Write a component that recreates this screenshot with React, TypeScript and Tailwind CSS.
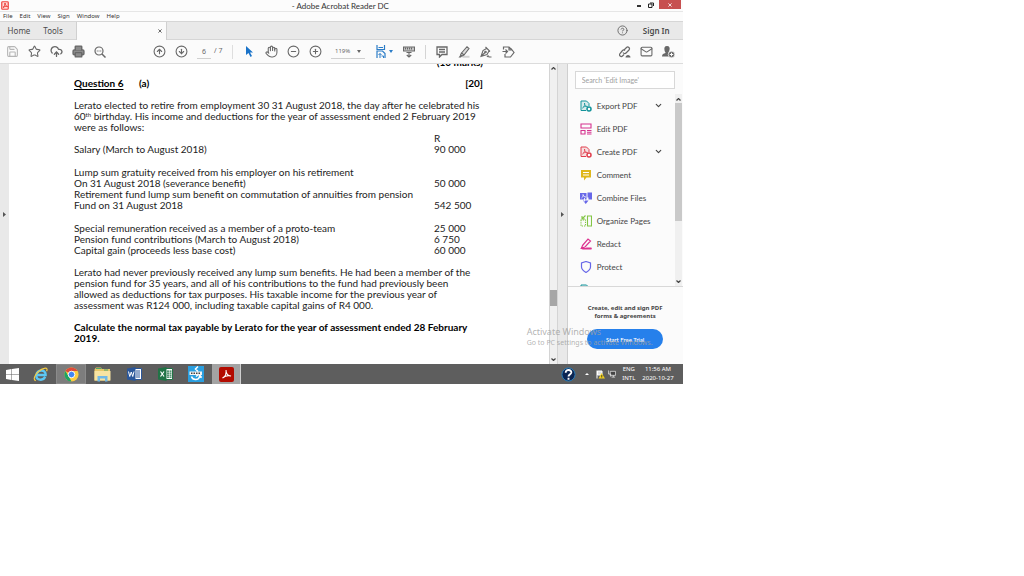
import * as React from 'react';
import {
  ChevronDown,
  CircleArrowDown,
  CircleArrowUp,
  CircleHelp,
  CircleMinus,
  CirclePlus,
  CloudUpload,
  Hand,
  Mail,
  Printer,
  Save,
  Star,
} from 'lucide-react';

type IconButtonProps = { label: string; className?: string; children: React.ReactNode };
const IconButton = ({ label, className = '', children }: IconButtonProps) => (
  <button aria-label={label} className={`flex h-5 w-[22px] shrink-0 items-center justify-center ${className}`}>
    {children}
  </button>
);

const TitleBar = () => (
  <header className="flex h-3 items-start border-b border-[#e6e6e6] bg-[#fcfcfc]">
    <div className="flex w-12 pt-px pl-px">
      <svg viewBox="0 0 16 18" className="h-[9px] w-2">
        <rect x="1.5" y="1.5" width="13" height="15" rx="1.5" fill="#ffd9d6" stroke="#f0443e" strokeWidth="2.4" />
        <path d="M4 13c3-2 4-6 4-9 0 4 2 6 5 7-3-1-6 0-9 2Z" fill="none" stroke="#e8302a" strokeWidth="1.8" />
      </svg>
    </div>
    <h1 className="flex-1 text-center font-[Lato,sans-serif] text-[8px] leading-[12px] text-[#333]">
      - Adobe Acrobat Reader DC
    </h1>
    <div className="flex items-start">
      <button aria-label="Minimize" className="flex h-[9px] w-3 items-center justify-center">
        <span className="mt-[3px] h-0.5 w-1 bg-[#333]" />
      </button>
      <button aria-label="Restore" className="flex h-[9px] w-3 items-center justify-center">
        <svg viewBox="0 0 12 12" className="h-[6px] w-[6px]" fill="none" stroke="#222" strokeWidth="2">
          <path d="M1 4h7v7H1zM4 2h7v6" />
        </svg>
      </button>
      <button aria-label="Close" className="ml-0.5 flex h-[9px] w-[22px] items-center justify-center bg-[#c75050]">
        <svg viewBox="0 0 10 10" className="h-1 w-1" stroke="#fff" strokeWidth="2">
          <path d="M1 1l8 8M9 1l-8 8" />
        </svg>
      </button>
      <span className="w-0.5" />
    </div>
  </header>
);

const menus = ['File', 'Edit', 'View', 'Sign', 'Window', 'Help'];
const MenuBar = () => (
  <nav className="flex h-[9px] items-center gap-[7px] bg-[#fcfcfc] pl-[3px] text-[6px] leading-[9px] text-[#333]">
    {menus.map((m) => (
      <button key={m}>{m}</button>
    ))}
  </nav>
);

const TabBar = () => (
  <div className="flex h-[19px] items-stretch border-y border-[#d6d6d6] bg-[#e9e9e9] text-[8px] text-[#4b4b4b]">
    <button className="w-9 pl-0.5">Home</button>
    <button className="w-[34px]">Tools</button>
    <span className="w-1.5" />
    <div className="-mb-px flex w-[91px] items-center justify-end border-x border-[#d0d0d0] bg-[#fbfbfb] pr-1">
      <button aria-label="Close tab">
        <svg viewBox="0 0 10 10" className="h-1 w-1" stroke="#444" strokeWidth="2">
          <path d="M1 1l8 8M9 1l-8 8" />
        </svg>
      </button>
    </div>
    <div className="flex-1" />
    <button aria-label="Help" className="mr-[15px]">
      <CircleHelp size={11} strokeWidth={2} color="#666" />
    </button>
    <button className="mr-[13px] font-semibold">Sign In</button>
  </div>
);

const Toolbar = () => (
  <div className="flex h-6 items-center border-b border-[#dcdcdc] bg-[#fbfbfb] pl-px text-[#686868]">
    <IconButton label="Save" className="text-[#b5b5b5]">
      <Save size={13} strokeWidth={2} />
    </IconButton>
    <IconButton label="Star">
      <Star size={13} strokeWidth={2} />
    </IconButton>
    <IconButton label="Upload">
      <CloudUpload size={13} strokeWidth={2.4} />
    </IconButton>
    <IconButton label="Print">
      <Printer size={13} strokeWidth={2.6} fill="#8b8b8b" />
    </IconButton>
    <IconButton label="Find">
      <svg viewBox="0 0 24 24" className="h-3 w-3" fill="none" stroke="currentColor" strokeWidth="2.4">
        <circle cx="10" cy="10" r="8" />
        <path d="M16 16l7 7" strokeWidth="3" />
        <path d="M5.5 10h2M9 10h2M12.5 10h2" />
      </svg>
    </IconButton>
    <IconButton label="Previous page" className="ml-[37px]">
      <CircleArrowUp size={13} strokeWidth={2} />
    </IconButton>
    <IconButton label="Next page">
      <CircleArrowDown size={13} strokeWidth={2} />
    </IconButton>
    <input
      aria-label="Page number"
      defaultValue="6"
      className="ml-[5px] h-[14px] w-[14px] border-b border-[#d0d0d0] text-center text-[7px]"
    />
    <span className="ml-[3px] w-[18px] text-[7px] whitespace-pre">/ 7</span>
    <span className="h-[14px] w-px bg-[#dedede]" />
    <IconButton label="Select" className="ml-[5px]">
      <svg viewBox="0 0 14 22" className="h-[11px] w-[7px]" fill="#1a73c9">
        <path d="M0 0l14 13H8l4 7-3 2-4-8-5 4z" />
      </svg>
    </IconButton>
    <IconButton label="Pan">
      <Hand size={13} strokeWidth={2} />
    </IconButton>
    <IconButton label="Zoom out">
      <CircleMinus size={13} strokeWidth={2} />
    </IconButton>
    <IconButton label="Zoom in">
      <CirclePlus size={13} strokeWidth={2} />
    </IconButton>
    <div className="ml-[5px] flex h-[14px] w-[34px] items-center justify-between border-b border-[#d0d0d0] pr-1 pl-1">
      <select aria-label="Zoom" className="w-5 appearance-none text-[6px] leading-[10px]" defaultValue="119%">
        <option>119%</option>
      </select>
      <svg viewBox="0 0 8 6" className="h-[3px] w-1" fill="#666">
        <path d="M0 0h8L4 6z" />
      </svg>
    </div>
    <button aria-label="Page fit" className="ml-[11px] flex w-[17px] items-center gap-[3px] text-[#2b7cc7]">
      <svg viewBox="0 0 20 26" className="h-[13px] w-2.5" fill="none" stroke="currentColor" strokeWidth="2.4">
        <path d="M2 0v9h15V0M2 26V12h11l5 5v9" />
        <path d="M5 5h9M8 17v9M5 20l3-3 3 3M11 22h4v4" strokeWidth="2" />
      </svg>
      <svg viewBox="0 0 8 6" className="h-[3px] w-1 shrink-0" fill="currentColor">
        <path d="M0 0h8L4 6z" />
      </svg>
    </button>
    <IconButton label="Toolbar mode" className="ml-[5px]">
      <svg viewBox="0 0 24 24" className="h-3 w-3" fill="none" stroke="currentColor" strokeWidth="2.2">
        <path d="M1 2h22v8H1z" fill="#c9c9c9" />
        <path d="M5 3v4M9 3v4M13 3v4M17 3v4M12 12v10M7.500 18l4.500 4 4.500-4M7 13h10" />
      </svg>
    </IconButton>
    <span className="ml-[5px] h-[14px] w-px bg-[#d4d4d4]" />
    <IconButton label="Comment" className="ml-[5px]">
      <svg viewBox="0 0 24 24" className="h-3 w-3" fill="none" stroke="currentColor" strokeWidth="2.6">
        <path d="M2 2h20v15H12l-5 5v-5H2zM6 7h12M6 12h12" />
      </svg>
    </IconButton>
    <IconButton label="Highlight">
      <svg viewBox="0 0 24 24" className="h-3 w-3" fill="none" stroke="currentColor" strokeWidth="2.2">
        <path d="M9 21.500h14" stroke="#d2d2d2" strokeWidth="4" />
        <path d="M7 14L18 1.500l4 3.500L12 18zM7 14l-2 4 3 2 4-2" fill="#dcdcdc" />
        <path d="M5 18l-4 5h5l2-3z" fill="currentColor" stroke="none" />
      </svg>
    </IconButton>
    <IconButton label="Sign">
      <svg viewBox="0 0 24 24" className="h-3 w-3" fill="none" stroke="currentColor" strokeWidth="2.2">
        <path d="M11 2l9 9M13 5l-7 4-4 12 12-4 4-7M2 21l8-8" />
        <circle cx="11" cy="12" r="1.500" />
        <path d="M14 22c2-3 3-3 4 0h5" />
      </svg>
    </IconButton>
    <IconButton label="Share document">
      <svg viewBox="0 0 26 24" className="h-3 w-[13px]" fill="none" stroke="currentColor" strokeWidth="2.4">
        <path d="M3 7V2h11l4 4M6 16v6h11l7-9-6-8M1 11h10M7 7l4 4-4 4M14 2v6h6" />
      </svg>
    </IconButton>
    <div className="flex-1" />
    <IconButton label="Share link">
      <svg viewBox="0 0 24 24" className="h-3 w-3" fill="none" stroke="currentColor" strokeWidth="2.4">
        <path d="M10 8l5-5c3-3 8 1 5 5l-6 6c-2 2-5 1-6-1M12 9c-2-2-4-1-5 0l-5 6c-3 4 2 8 5 5l3-3" />
        <path d="M13 23c0-7 10-7 10 0z" fill="currentColor" stroke="none" />
      </svg>
    </IconButton>
    <IconButton label="Mail">
      <Mail size={13} strokeWidth={2} />
    </IconButton>
    <IconButton label="Add person" className="mr-[3px]">
      <svg viewBox="0 0 26 24" className="h-3 w-[13px]" fill="currentColor">
        <path d="M10 0c5 0 6 4 5 8-1 3-2 4-2 6l3 2v5H0c0-5 3-6 7-7 0-2-2-3-2-6-1-4 0-8 5-8Z" />
        <circle cx="19" cy="17" r="6.500" stroke="#fbfbfb" strokeWidth="1.500" />
        <path d="M19 13.500v7M15.500 17h7" stroke="#fbfbfb" strokeWidth="2" />
      </svg>
    </IconButton>
  </div>
);

const ledger: [string, string][] = [
  ['', 'R'],
  ['Salary (March to August 2018)', '90 000'],
  ['', ''],
  ['Lump sum gratuity received from his employer on his retirement', ''],
  ['On 31 August 2018 (severance benefit)', '50 000'],
  ['Retirement fund lump sum benefit on commutation of annuities from pension', ''],
  ['Fund on 31 August 2018', '542 500'],
  ['', ''],
  ['Special remuneration received as a member of a proto-team', '25 000'],
  ['Pension fund contributions (March to August 2018)', '6 750'],
  ['Capital gain (proceeds less base cost)', '60 000'],
];

const Page = () => (
  <main className="min-w-0 flex-1 overflow-hidden bg-white pb-5 pl-[65px] font-[Lato,sans-serif] text-[10px] leading-[11px] whitespace-nowrap text-[#222]">
    <div className="flex h-1 w-[409px] items-end justify-end overflow-hidden font-bold text-black">(10 marks)</div>
    <div className="mt-2.5 flex w-[409px] font-bold text-black">
      <h2 className="w-[65px] underline underline-offset-2">Question 6</h2>
      <span className="flex-1">(a)</span>
      <span>[20]</span>
    </div>
    <p className="mt-[11px]">
      Lerato elected to retire from employment 30 31 August 2018, the day after he celebrated his
      <br />
      60<sup className="text-[6px] leading-[0px]">th</sup> birthday. His income and deductions for the year of
      assessment ended 2 February 2019
      <br />
      were as follows:
    </p>
    <table>
      <tbody>
        {ledger.map(([item, amount], i) => (
          <tr key={i} className={item || amount ? 'h-[11px]' : 'h-3'}>
            <td className="w-[360px] max-w-[360px] p-0">{item}</td>
            <td className="p-0">{amount}</td>
          </tr>
        ))}
      </tbody>
    </table>
    <p className="mt-[11px]">
      Lerato had never previously received any lump sum benefits. He had been a member of the
      <br />
      pension fund for 35 years, and all of his contributions to the fund had previously been
      <br />
      allowed as deductions for tax purposes. His taxable income for the previous year of
      <br />
      assessment was R124 000, including taxable capital gains of R4 000.
    </p>
    <p className="mt-[11px] font-bold text-black">
      Calculate the normal tax payable by Lerato for the year of assessment ended 28 February
      <br />
      2019.
    </p>
  </main>
);

const Arrow = ({ up = false }) => (
  <svg viewBox="0 0 10 6" className="h-[3px] w-[5px] shrink-0" fill="none" stroke="#444" strokeWidth="2.4">
    <path d={up ? 'M1 5l4-4 4 4' : 'M1 1l4 4 4-4'} />
  </svg>
);

const DocScrollbar = () => (
  <div className="flex w-[9px] flex-col items-center border-x border-[#d4d4d4] bg-[#f0f0f0] pt-[3px] pb-[3px]">
    <Arrow up />
    <div className="flex-1" />
    <div className="h-4 w-[7px] bg-[#a6a6a6]" />
    <div className="h-[52px]" />
    <Arrow />
  </div>
);

const FileGlyph = ({ color }: { color: string }) => (
  <svg viewBox="0 0 24 24" className="h-3 w-3" fill="none" stroke={color} strokeWidth="2">
    <path d="M12 21H2V2h11l5 5v5" fill={color} fillOpacity=".15" />
    <path d="M5 16c4-3 5-7 4-10 0 5 2 7 6 7-4-1-7 0-10 3Z" strokeWidth="1.500" />
    <circle cx="18" cy="18" r="4" strokeWidth="3" fill="#fff" />
  </svg>
);

const tools: { name: string; more?: boolean; icon: React.ReactNode }[] = [
  { name: 'Export PDF', more: true, icon: <FileGlyph color="#13939a" /> },
  {
    name: 'Edit PDF',
    icon: (
      <svg viewBox="0 0 24 24" className="h-3 w-3" fill="none" stroke="#d6338f" strokeWidth="2.2">
        <path d="M2 2h20v8H2zM2 15h8v7H2zM14 15h9M14 18.500h9M14 22h9" />
      </svg>
    ),
  },
  { name: 'Create PDF', more: true, icon: <FileGlyph color="#e03e4d" /> },
  {
    name: 'Comment',
    icon: (
      <svg viewBox="0 0 24 24" className="h-3 w-3">
        <path d="M2 2h20v15H13l-5 6v-6H2z" fill="#dfb71c" />
        <path d="M6 7h12M6 12h12" stroke="#fff" strokeWidth="2" />
      </svg>
    ),
  },
  {
    name: 'Combine Files',
    icon: (
      <svg viewBox="0 0 24 24" className="h-3 w-3" fill="#6767e8">
        <path d="M0 2h13v13H0zM15 1h9v14h-7v-4h-2zM6 17h11l-5.500 7z" />
        <path d="M3 12c3-2 4-5 3-7 1 4 3 5 6 5M9 12v7" stroke="#fff" strokeWidth="1.600" fill="none" />
      </svg>
    ),
  },
  {
    name: 'Organize Pages',
    icon: (
      <svg viewBox="0 0 24 24" className="h-3 w-3" fill="none" stroke="#83c546" strokeWidth="2.2">
        <path d="M15 2h8v20h-8z" />
        <path d="M2 10v12h9V10z" strokeDasharray="2.500 2" />
        <path d="M11 1L5 7M4 2v6h6" />
      </svg>
    ),
  },
  {
    name: 'Redact',
    icon: (
      <svg viewBox="0 0 24 24" className="h-3 w-3" fill="none" stroke="#dd3490" strokeWidth="2.4">
        <path d="M5 15L16 2l5 4-11 12-7 2zM1 21h22" />
        <path d="M13 19h10v4H3z" fill="#dd3490" stroke="none" />
      </svg>
    ),
  },
  {
    name: 'Protect',
    icon: (
      <svg viewBox="0 0 24 24" className="h-3 w-3" fill="none" stroke="#6767e8" strokeWidth="2.4">
        <path d="M12 1l9 3v8c0 5-4 8-9 11-5-3-9-6-9-11V4z" />
      </svg>
    ),
  },
  { name: 'Compress PDF', icon: <FileGlyph color="#13939a" /> },
];

const ToolsPane = () => (
  <aside className="flex w-[116px] flex-col border-l border-[#cfcfcf] bg-[#fbfbfb] font-[Lato,sans-serif]">
    <input
      aria-label="Search tools"
      placeholder="Search 'Edit Image'"
      className="mt-[7px] mr-2 ml-[7px] h-[18px] border border-[#d8d8d8] bg-white px-1.5 text-[7px] placeholder:text-[#a0a0a0]"
    />
    <div className="mt-[5px] flex min-h-0 grow basis-0 overflow-hidden border-b border-[#d8d8d8]">
      <ul className="min-w-0 flex-1 overflow-hidden pl-3">
        {tools.map((t) => (
          <li key={t.name} className="h-[23px]">
            <button className="flex h-[23px] w-full items-center text-[8px] whitespace-nowrap text-[#454545]">
              <span className="w-[17px]">{t.icon}</span>
              <span className="flex-1 text-left">{t.name}</span>
              {t.more && <ChevronDown size={9} strokeWidth={3} className="mr-3" />}
            </button>
          </li>
        ))}
      </ul>
      <div className="mr-px flex w-[7px] flex-col items-center bg-[#f0f0f0] pt-1 pb-[3px]">
        <Arrow up />
        <div className="mt-0.5 h-[118px] w-[7px] shrink-0 bg-[#c9c9c9]" />
        <div className="flex-1" />
        <Arrow />
      </div>
    </div>
    <div className="flex h-[77px] flex-col items-center pt-[17px]">
      <p className="text-center font-['Noto_Sans',sans-serif] text-[6px] leading-[8px] font-bold text-[#444]">
        Create, edit and sign PDF
        <br />
        forms &amp; agreements
      </p>
      <button className="mt-[9px] h-5 w-[76px] rounded-full bg-[#2680eb] text-[6px] font-semibold text-white">
        Start Free Trial
      </button>
    </div>
  </aside>
);

const Taskbar = () => (
  <footer className="flex h-5 items-center bg-[#5e5e5e] text-[6px] leading-[9px] text-white">
    <button aria-label="Start" className="flex w-6 justify-center">
      <svg viewBox="0 0 26 26" className="h-[13px] w-[13px]" fill="#fff">
        <path d="M0 4l11-2v10H0zM12 2l14-2v12H12zM0 13h11v11L0 22zM12 13h14v13l-14-2z" />
      </svg>
    </button>
    <button aria-label="Internet Explorer" className="flex w-8 justify-center">
      <svg viewBox="0 0 32 32" className="h-[15px] w-[15px]" fill="none">
        <path d="M9 17h18c1-13-19-13-20 1 0 11 15 12 19 3" stroke="#5cc8f5" strokeWidth="5" />
        <path d="M6 29C-3 28 7 8 24 3c6-2 7 2 5 6" stroke="#f6cd43" strokeWidth="2.500" />
      </svg>
    </button>
    <button aria-label="Chrome" className="flex h-5 w-[30px] items-center justify-center border border-[#8b8b8b] bg-[#7d7d7d]">
      <svg viewBox="0 0 32 32" className="h-[15px] w-[15px]">
        <circle cx="16" cy="16" r="15" fill="#ffcd40" />
        <path d="M16 16L3 8.500A15 15 0 0 1 29 8.500H16z" fill="#de4b3c" />
        <path d="M3 8.500L10 20l6 11A15 15 0 0 1 3 8.500Z" fill="#1da462" />
        <circle cx="16" cy="16" r="7" fill="#4285f4" stroke="#fff" strokeWidth="2" />
      </svg>
    </button>
    <button aria-label="File Explorer" className="flex w-8 justify-center">
      <svg viewBox="0 0 34 30" className="h-[15px] w-[17px]">
        <path d="M1 5l3-4h10l2 3h16v23H1z" fill="#e9c869" />
        <path d="M4 3h11M20 6h8" stroke="#4ca56c" strokeWidth="2" />
        <path d="M1 8h32v19H1z" fill="#f8e4a2" />
        <path d="M7 29V18h20v11h-5v-6H12v6z" fill="#72b9e6" />
      </svg>
    </button>
    <button aria-label="Word" className="flex w-8 justify-center">
      <svg viewBox="0 0 30 28" className="h-3.5 w-[15px]">
        <path d="M15 3h14v22H15z" fill="#fff" stroke="#2b579a" strokeWidth="2" />
        <path d="M18 8h8M18 12h8M18 16h8M18 20h8" stroke="#2b579a" strokeWidth="2" />
        <path d="M0 3l17-3v28L0 25z" fill="#2b579a" />
        <path d="M3 9l2.500 10L8.500 10l3 9L14 9" fill="none" stroke="#fff" strokeWidth="2" />
      </svg>
    </button>
    <button aria-label="Excel" className="flex w-[30px] justify-center">
      <svg viewBox="0 0 30 28" className="h-3.5 w-[15px]">
        <path d="M15 3h14v22H15z" fill="#fff" stroke="#217346" strokeWidth="2" />
        <path d="M18 8h9M18 12h9M18 16h9M18 20h9" stroke="#217346" strokeWidth="2.500" strokeDasharray="4 1" />
        <path d="M0 3l17-3v28L0 25z" fill="#217346" />
        <path d="M5 9l7 10M12 9L5 19" stroke="#fff" strokeWidth="2.400" />
      </svg>
    </button>
    <button aria-label="Connect" className="flex w-[31px] justify-center">
      <svg viewBox="0 0 32 32" className="h-4 w-4">
        <path d="M0 0h32v32H0z" fill="#2a9fe0" />
        <path d="M20 1l-5 5 5 5M7 21c2 8 15 8 16 0l4 2-5-7-6 5" fill="none" stroke="#fff" strokeWidth="3" />
        <path d="M3 11h25v7H3z" fill="#f4f4f4" />
        <path d="M6 14.500h20" stroke="#444" strokeWidth="3" strokeDasharray="3 2" />
      </svg>
    </button>
    <button
      aria-label="Acrobat Reader"
      className="ml-px flex h-5 w-[29px] items-center justify-center border-r border-[#cfcfcf] bg-[#a3a3a3]"
    >
      <svg viewBox="0 0 30 30" className="h-[15px] w-[15px]">
        <rect width="30" height="30" rx="4" fill="#b30b00" />
        <path
          d="M7 22c6-3 8-10 7-16 0 8 5 12 10 12-6-2-12 0-17 4Z"
          fill="none"
          stroke="#fff"
          strokeWidth="2.200"
        />
      </svg>
    </button>
    <div className="flex-1" />
    <button aria-label="Support" className="mr-[9px]">
      <svg viewBox="0 0 32 32" className="h-[15px] w-[15px]" fill="none">
        <circle cx="16" cy="16" r="14" fill="#0b2552" stroke="#2a80bd" strokeWidth="2" />
        <path d="M10 12c0-8 13-7 12 0-1 4-6 4-6 8M16 23v4" stroke="#fff" strokeWidth="4" />
      </svg>
    </button>
    <button aria-label="Show hidden icons" className="mr-[7px]">
      <svg viewBox="0 0 8 4" className="h-0.5 w-1" fill="#fff">
        <path d="M0 4l4-4 4 4z" />
      </svg>
    </button>
    <svg viewBox="0 0 18 18" className="mr-[3px] h-[9px] w-[9px]">
      <path d="M2 1v16M3 2h9v8H3z" stroke="#fff" strokeWidth="2" fill="#ddd" />
      <path d="M11 6l7 11H5z" fill="#f2d01e" />
      <path d="M11.500 10v5" stroke="#222" strokeWidth="1.500" />
    </svg>
    <svg viewBox="0 0 18 18" className="mr-1.5 h-2 w-2" fill="#444" stroke="#eee" strokeWidth="1.600">
      <path d="M5 3h12v9H5zM8 16h8M12 12v4M1 1v8h5v6" />
    </svg>
    <div className="mr-[7px] text-center">
      ENG
      <br />
      INTL
    </div>
    <time className="mr-[9px] text-center">
      11:56 AM
      <br />
      2020-10-27
    </time>
  </footer>
);

export default function App() {
  return (
    <div className="min-h-screen bg-white">
      <div className="w-2/3 font-['Noto_Sans','Open_Sans',sans-serif]">
        <TitleBar />
        <MenuBar />
        <TabBar />
        <Toolbar />
        <div className="relative flex items-stretch">
          <button aria-label="Show navigation" className="flex w-[9px] items-center justify-center bg-[#e9e9e9]">
            <svg viewBox="0 0 6 10" className="h-[5px] w-[3px]" fill="#555">
              <path d="M0 0l6 5-6 5z" />
            </svg>
          </button>
          <Page />
          <DocScrollbar />
          <button aria-label="Hide tools" className="flex w-[9px] items-center justify-center bg-[#e9e9e9]">
            <svg viewBox="0 0 6 10" className="h-[5px] w-[3px]" fill="#555">
              <path d="M0 0l6 5-6 5z" />
            </svg>
          </button>
          <ToolsPane />
          <div className="pointer-events-none absolute right-7 bottom-4 w-32 whitespace-nowrap text-[#a0a0a0]/80">
            <p className="text-[9px] leading-[12px]">Activate Windows</p>
            <p className="text-[7px] leading-[10px]">Go to PC settings to activate Windows.</p>
          </div>
        </div>
        <Taskbar />
      </div>
    </div>
  );
}
